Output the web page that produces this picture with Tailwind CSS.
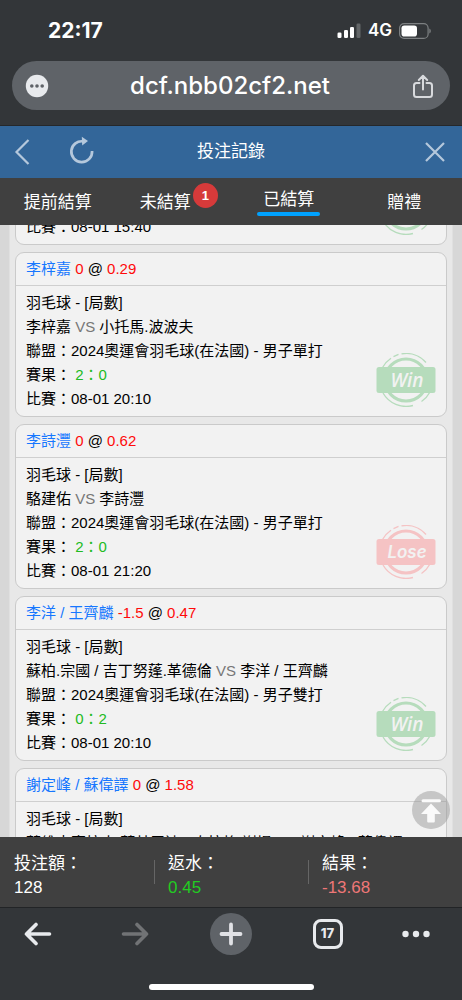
<!DOCTYPE html>
<html lang="zh-Hant">
<head>
<meta charset="utf-8">
<meta name="viewport" content="width=device-width, initial-scale=1">
<title>投注記錄</title>
<script src="https://cdn.jsdelivr.net/npm/@tailwindcss/browser@4"></script>
</head>
<body class="flex h-screen flex-col overflow-hidden bg-[#333639] font-['Liberation_Sans','Noto_Sans_CJK_TC',sans-serif]">
<svg class="hidden" aria-hidden="true">
  <symbol id="win" viewBox="0 0 60 54">
    <g fill="none" stroke="#b6dcbc">
      <circle cx="30" cy="27" r="21" stroke-width="3.2"/>
      <path d="M25.500 0.900A26.500 26.500 0 0 1 50 9.500" stroke-width="1.300"/>
      <path d="M17.500 3.600l5-2.200M6.500 14.500a26.500 26.500 0 0 1 8.500-9.300" stroke-width="1.300"/>
      <path d="M7 40A26.500 26.500 0 0 0 37 52.500M45.500 48.500a26.500 26.500 0 0 0 8.500-9.500" stroke-width="1.300"/>
    </g>
    <rect x="0.500" y="14" width="59" height="26" rx="2.500" fill="#b6dcbc"/>
    <text x="31" y="34" text-anchor="middle" font-family="Open Sans, sans-serif" font-size="19" font-weight="600" font-style="italic" fill="#f2f2f2">Win</text>
  </symbol>
  <symbol id="lose" viewBox="0 0 60 54">
    <g fill="none" stroke="#f5c3c4">
      <circle cx="30" cy="27" r="21" stroke-width="3.200"/>
      <path d="M25.500 0.900A26.500 26.500 0 0 1 50 9.500" stroke-width="1.300"/>
      <path d="M17.500 3.600l5-2.200M6.500 14.500a26.500 26.500 0 0 1 8.500-9.300" stroke-width="1.300"/>
      <path d="M7 40A26.500 26.500 0 0 0 37 52.500M45.500 48.500a26.500 26.500 0 0 0 8.500-9.500" stroke-width="1.300"/>
    </g>
    <rect x="0.500" y="14" width="59" height="26" rx="2.500" fill="#f5c3c4"/>
    <text x="31" y="33" text-anchor="middle" font-family="Inter, sans-serif" font-size="17" font-weight="600" font-style="italic" fill="#f2f2f2">Lose</text>
  </symbol>
</svg>

<!-- Browser chrome -->
<header class="shrink-0 border-b border-[#26282a] font-['Inter',sans-serif] text-white">
  <div class="flex h-[61px] items-center justify-between pr-[31px] pl-12">
    <time class="text-[21px] font-bold">22:17</time>
    <div class="flex items-center gap-[7px]">
      <svg class="h-4 w-6" viewBox="0 0 24 16" fill="#fff" aria-hidden="true">
        <rect x="0.500" y="9.500" width="4" height="5.500" rx="1.300"/><rect x="7" y="7" width="4" height="8" rx="1.300"/><rect x="13" y="4" width="4" height="11" rx="1.300"/><rect x="19.500" y="0.500" width="4" height="14.500" rx="1.300" fill="#636668"/>
      </svg>
      <span class="text-[17px] font-semibold">4G</span>
      <svg class="h-4 w-8" viewBox="0 0 32 16" aria-hidden="true">
        <rect x="0.600" y="0.600" width="28.500" height="14.800" rx="4.500" fill="none" stroke="#7d8082" stroke-width="1.200"/>
        <rect x="2.500" y="2.500" width="15.500" height="11" rx="2.800" fill="#fff"/>
        <path d="M30.300 5.500c2 .8 2 4.200 0 5z" fill="#7d8082"/>
      </svg>
    </div>
  </div>
  <div class="mx-3 mb-[15px] flex h-[49px] items-center justify-between rounded-full bg-[#5f6368] pr-[13px] pl-[11px]">
    <button aria-label="更多" class="flex size-7 items-center justify-center">
      <svg class="size-6" viewBox="0 0 24 24"><circle cx="12" cy="12" r="11.200" fill="#e8eaed"/><g fill="#5f6368"><circle cx="6.800" cy="12" r="1.800"/><circle cx="12" cy="12" r="1.800"/><circle cx="17.200" cy="12" r="1.800"/></g></svg>
    </button>
    <span class="text-2xl font-medium">dcf.nbb02cf2.net</span>
    <button aria-label="分享" class="flex size-7 items-center justify-center">
      <svg class="size-7" viewBox="0 0 28 28" fill="none" stroke="#d8dadd" stroke-width="2" stroke-linecap="round" stroke-linejoin="round"><path d="M10.500 11H7.500Q5 11 5 13.500V22.500Q5 25 7.500 25H20.500Q23 25 23 22.500V13.500Q23 11 20.500 11H17.500M14 17.500V4M9.800 8 14 3.800 18.200 8"/></svg>
    </button>
  </div>
</header>

<!-- Page title bar -->
<div class="grid h-[52px] shrink-0 grid-cols-[1fr_auto_1fr] items-center bg-[#336699] px-2 text-[17px] text-white">
  <div class="flex items-center gap-7">
    <button aria-label="返回" class="size-8"><svg class="size-8" viewBox="0 0 32 32" fill="none" stroke="#b5c8dc" stroke-width="2.200"><path d="M20.500 4 8.500 16l12 12"/></svg></button>
    <button aria-label="重新整理" class="size-8"><svg class="size-8" viewBox="0 0 32 32" fill="none"><path d="M15.500 5.400A10.400 10.400 0 1 0 24.100 15" stroke="#b5c8dc" stroke-width="2.700"/><path d="M13.800 0.800 20 5 14.200 9.500z" fill="#b5c8dc"/></svg></button>
  </div>
  <h1>投注記錄</h1>
  <button aria-label="關閉" class="mr-[3px] size-8 justify-self-end"><svg class="size-8" viewBox="0 0 32 32" fill="none" stroke="#b5c8dc" stroke-width="2.200"><path d="m7 7 18 18M25 7 7 25"/></svg></button>
</div>

<nav class="grid h-[47px] shrink-0 grid-cols-4 bg-[#404040] text-[17px] leading-6 text-white">
  <button class="pt-[3px]">提前結算</button>
  <button class="pt-[3px] pr-4"><span class="relative inline-block">未結算<span class="absolute -top-2 left-full ml-0.5 size-[25px] rounded-full bg-[#d63a3a] text-center text-[13px] leading-[25px] font-bold">1</span></span></button>
  <button class="flex flex-col items-center pt-2.5" aria-current="page">已結算<span class="h-1 w-[63px] rounded-full bg-[#00a2ff]"></span></button>
  <button class="pt-[3px]">贈禮</button>
</nav>

<!-- Bet list -->
<main class="relative min-h-0 flex-1 overflow-hidden bg-[#d7d7d7] px-[9px] text-[15px] leading-6 text-black">
  <div class="-mt-[145px] flex flex-col gap-[7px] border-x border-[#e0e0e0] bg-[#e8e8e8] px-[5px]">
    <article class="relative rounded-[9px] border border-[#cacaca] bg-[#f2f2f2]">
      <h2 class="h-[33px] border-b border-[#cfcfcf] px-2.5 leading-8">&nbsp;</h2>
      <div class="flex h-[130px] flex-col justify-end px-2.5 pb-[5px]"><p>比賽：08-01 15:40</p></div>
      <svg class="absolute right-2.5 bottom-[9px] h-[54px] w-[60px]" role="img" aria-label="Win"><use href="#win"/></svg>
    </article>
    <article class="relative rounded-[9px] border border-[#cacaca] bg-[#f2f2f2]">
      <h2 class="h-[33px] border-b border-[#cfcfcf] px-2.5 leading-8"><span class="text-[#1677ff]">李梓嘉</span> <span class="text-[#ff0a0a]">0</span> @ <span class="text-[#ff0a0a]">0.29</span></h2>
      <div class="px-2.5 py-[5px]">
        <p>羽毛球 - [局數]</p>
        <p>李梓嘉 <span class="text-[#777]">VS</span> 小托馬.波波夫</p>
        <p>聯盟：2024奧運會羽毛球(在法國) - 男子單打</p>
        <p>賽果： <span class="text-[#22bb22]">2：0</span></p>
        <p>比賽：08-01 20:10</p>
      </div>
      <svg class="absolute right-2.5 bottom-[9px] h-[54px] w-[60px]" role="img" aria-label="Win"><use href="#win"/></svg>
    </article>
    <article class="relative rounded-[9px] border border-[#cacaca] bg-[#f2f2f2]">
      <h2 class="h-[33px] border-b border-[#cfcfcf] px-2.5 leading-8"><span class="text-[#1677ff]">李詩灃</span> <span class="text-[#ff0a0a]">0</span> @ <span class="text-[#ff0a0a]">0.62</span></h2>
      <div class="px-2.5 py-[5px]">
        <p>羽毛球 - [局數]</p>
        <p>駱建佑 <span class="text-[#777]">VS</span> 李詩灃</p>
        <p>聯盟：2024奧運會羽毛球(在法國) - 男子單打</p>
        <p>賽果： <span class="text-[#22bb22]">2：0</span></p>
        <p>比賽：08-01 21:20</p>
      </div>
      <svg class="absolute right-2.5 bottom-[9px] h-[54px] w-[60px]" role="img" aria-label="Lose"><use href="#lose"/></svg>
    </article>
    <article class="relative rounded-[9px] border border-[#cacaca] bg-[#f2f2f2]">
      <h2 class="h-[33px] border-b border-[#cfcfcf] px-2.5 leading-8"><span class="text-[#1677ff]">李洋 / 王齊麟</span> <span class="text-[#ff0a0a]">-1.5</span> @ <span class="text-[#ff0a0a]">0.47</span></h2>
      <div class="px-2.5 py-[5px]">
        <p>羽毛球 - [局數]</p>
        <p>蘇柏.宗國 / 吉丁努蓬.革德倫 <span class="text-[#777]">VS</span> 李洋 / 王齊麟</p>
        <p>聯盟：2024奧運會羽毛球(在法國) - 男子雙打</p>
        <p>賽果： <span class="text-[#22bb22]">0：2</span></p>
        <p>比賽：08-01 20:10</p>
      </div>
      <svg class="absolute right-2.5 bottom-[9px] h-[54px] w-[60px]" role="img" aria-label="Win"><use href="#win"/></svg>
    </article>
    <article class="relative rounded-[9px] border border-[#cacaca] bg-[#f2f2f2]">
      <h2 class="h-[33px] border-b border-[#cfcfcf] px-2.5 leading-8"><span class="text-[#1677ff]">謝定峰 / 蘇偉譯</span> <span class="text-[#ff0a0a]">0</span> @ <span class="text-[#ff0a0a]">1.58</span></h2>
      <div class="px-2.5 py-[5px]">
        <p>羽毛球 - [局數]</p>
        <p>薩維克賽拉杰.蘭基雷迪 / 奇拉格.謝提 <span class="text-[#777]">VS</span> 謝定峰 / 蘇偉譯</p>
      </div>
    </article>
  </div>
  <button aria-label="回到頂部" class="absolute right-3 bottom-2 size-[38px] rounded-full bg-[#999]/50">
    <svg class="size-[38px]" viewBox="0 0 38 38" fill="#fafafa"><rect x="9.500" y="8.300" width="19.500" height="3" rx="1.500"/><path d="M19 12.500 29 23h-6.200v7.500q0 1-1 1h-5.600q-1 0-1-1V23H9z"/></svg>
  </button>
</main>

<!-- Totals -->
<dl class="grid h-[70px] shrink-0 grid-cols-3 bg-[#404040] pt-[15px] text-[17px] leading-6 text-white">
  <div class="pl-3.5"><dt>投注額：</dt><dd>128</dd></div>
  <div class="relative pl-3.5 before:absolute before:top-2 before:left-0 before:h-6 before:w-px before:bg-[#666]"><dt>返水：</dt><dd class="text-[#22cc22]">0.45</dd></div>
  <div class="relative pl-3.5 before:absolute before:top-2 before:left-0 before:h-6 before:w-px before:bg-[#666]"><dt>結果：</dt><dd class="text-[#ee7777]">-13.68</dd></div>
</dl>

<!-- Browser toolbar -->
<footer class="h-[93px] shrink-0 border-t border-[#222426]">
  <div class="flex h-[52px] items-center justify-between pr-[31px] pl-3.5">
    <button aria-label="上一頁" class="flex w-12 justify-center"><svg class="size-7" viewBox="0 0 28 28" fill="none" stroke="#e8eaed" stroke-width="3.600" stroke-linecap="round" stroke-linejoin="round"><path d="M25.500 14H2.500M12 4.500 2.500 14l9.500 9.500"/></svg></button>
    <button aria-label="下一頁" class="flex w-12 justify-center"><svg class="size-7" viewBox="0 0 28 28" fill="none" stroke="#717375" stroke-width="3.600" stroke-linecap="round" stroke-linejoin="round"><path d="M2.500 14h23M16 4.500l9.500 9.500-9.500 9.500"/></svg></button>
    <button aria-label="新分頁" class="flex w-12 justify-center"><svg class="size-[42px]" viewBox="0 0 42 42"><circle cx="21" cy="21" r="21" fill="#5f6368"/><path d="M21 11.500v19M11.500 21h19" stroke="#e0e1e5" stroke-width="3.800" stroke-linecap="round"/></svg></button>
    <button aria-label="分頁" class="flex w-12 justify-center"><span class="flex size-[30px] items-center justify-center rounded-lg border-[3px] border-[#e8eaed] font-['Inter',sans-serif] text-[13px] font-extrabold text-[#e8eaed]">17</span></button>
    <button aria-label="選單" class="flex w-[31px] justify-center"><svg class="h-7 w-[30px]" viewBox="0 0 30 28" fill="#e8eaed"><circle cx="4.500" cy="14" r="3.200"/><circle cx="15" cy="14" r="3.200"/><circle cx="25.500" cy="14" r="3.200"/></svg></button>
  </div>
  <div class="mx-auto mt-6 h-1.5 w-[165px] rounded-full bg-white"></div>
</footer>
</body>
</html>
